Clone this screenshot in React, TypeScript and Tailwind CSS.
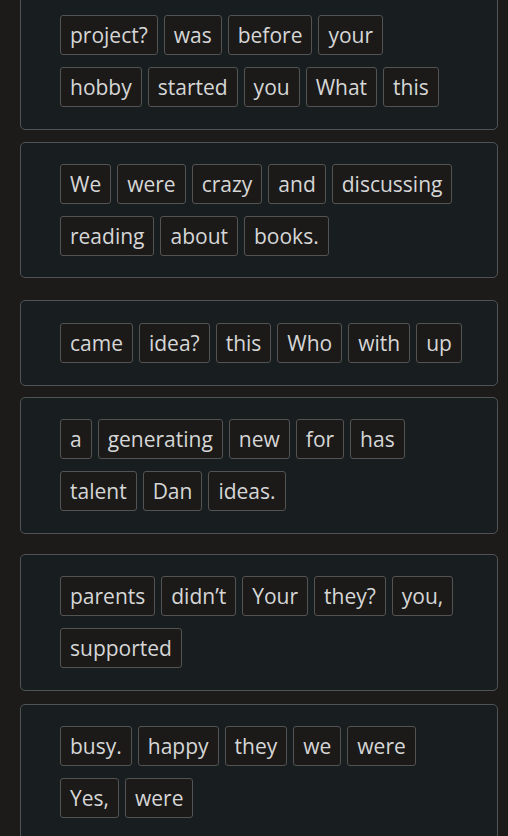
import React from "react";

const cards: { words: string[]; mt: string; py: string }[] = [
  { words: ["project?", "was", "before", "your", "hobby", "started", "you", "What", "this"], mt: "mt-[-7px]", py: "pt-[21px] pb-[22px]" },
  { words: ["We", "were", "crazy", "and", "discussing", "reading", "about", "books."], mt: "mt-[12px]", py: "pt-[21px] pb-[21px]" },
  { words: ["came", "idea?", "this", "Who", "with", "up"], mt: "mt-[22px]", py: "pt-[22px] pb-[22px]" },
  { words: ["a", "generating", "new", "for", "has", "talent", "Dan", "ideas."], mt: "mt-[11px]", py: "pt-[21px] pb-[22px]" },
  { words: ["parents", "didn\u2019t", "Your", "they?", "you,", "supported"], mt: "mt-[20px]", py: "pt-[21px] pb-[22px]" },
  { words: ["busy.", "happy", "they", "we", "were", "Yes,", "were"], mt: "mt-[13px]", py: "pt-[21px] pb-[21px]" },
];

export default function App() {
  return (
    <div
      className="w-[508px] h-[836px] overflow-hidden bg-[#1c1b19]"
      style={{ fontFamily: '"Open Sans", "Noto Sans", sans-serif' }}
    >
      <div className="flex flex-col">
        {cards.map((c, i) => (
          <div
            key={i}
            className={`${c.mt} ml-[20px] w-[478px] rounded-[5px] border border-[#4f5355] bg-[#181d1f] pl-[39px] pr-[30px] ${c.py}`}
          >
            <div className="flex flex-wrap gap-x-[6px] gap-y-[12px]">
              {c.words.map((w, j) => (
                <span
                  key={j}
                  className="h-[40px] rounded-[3px] border border-[#525352] bg-[#1b1a19] px-[9px] text-[21px] leading-[38px] text-[#d6d6d6]"
                >
                  {w}
                </span>
              ))}
            </div>
          </div>
        ))}
      </div>
    </div>
  );
}
